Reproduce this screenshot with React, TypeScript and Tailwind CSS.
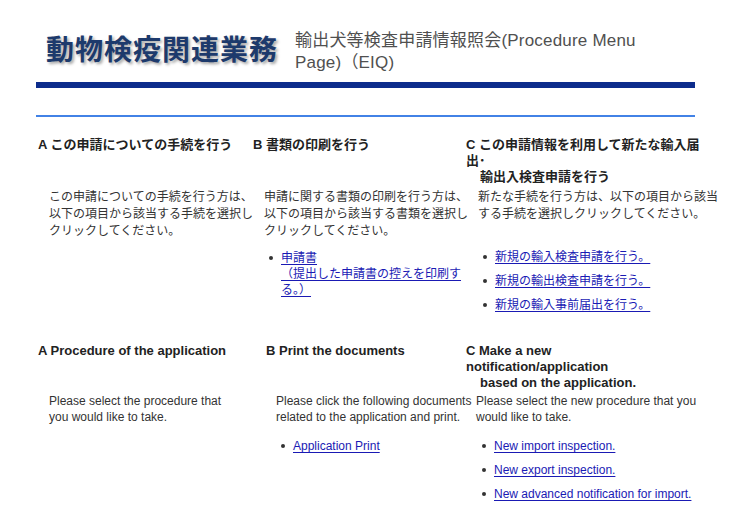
import React from "react";

const JP = { fontFamily: '"Liberation Sans", "Noto Sans CJK JP", sans-serif' };

function Dot() {
  return (
    <span className="w-[12px] shrink-0 flex items-center h-[16px]">
      <span className="block w-[4px] h-[4px] rounded-full bg-[#333]" />
    </span>
  );
}

function LinkItem({ children, dotPad }: { children: React.ReactNode; dotPad: string }) {
  return (
    <div className={`flex ${dotPad}`}>
      <Dot />
      <a href="#" className="text-[#1a1ab4] underline underline-offset-2 leading-[16px]">
        {children}
      </a>
    </div>
  );
}

export default function App() {
  return (
    <div className="w-[740px] h-[524px] bg-white overflow-hidden text-[#333] whitespace-nowrap" style={JP}>
      {/* header */}
      <div className="flex items-start pt-[30px] pl-[46px]">
        <div className="mt-[5px] text-[28px] leading-[32px] font-bold tracking-[1px] text-[#1d3a6c] [text-shadow:2px_2px_3px_rgba(0,0,0,0.35)]">
          動物検疫関連業務
        </div>
        <div className="ml-[17px] text-[17px] leading-[22px] tracking-[0.2px] text-[#505050]">
          輸出犬等検査申請情報照会(Procedure Menu
          <br />
          Page)（EIQ)
        </div>
      </div>
      <div className="ml-[36px] w-[659px] h-[6px] mt-[8px] bg-[#0d2c8c]" />
      <div className="ml-[36px] w-[659px] h-[2px] mt-[27px] bg-[#4282e6]" />

      {/* Japanese section */}
      <div className="flex mt-[20px] h-[206px] pl-[38px] text-[12px]">
        <div className="w-[215px]">
          <div className="h-[52px] text-[13px] font-bold leading-[16px] text-[#222]">A この申請についての手続を行う</div>
          <div className="pl-[11px] leading-[17px]">
            この申請についての手続を行う方は、
            <br />
            以下の項目から該当する手続を選択し
            <br />
            クリックしてください。
          </div>
        </div>
        <div className="w-[213px]">
          <div className="h-[52px] text-[13px] font-bold leading-[16px] text-[#222]">B 書類の印刷を行う</div>
          <div className="pl-[11px] leading-[17px]">
            申請に関する書類の印刷を行う方は、
            <br />
            以下の項目から該当する書類を選択し
            <br />
            クリックしてください。
          </div>
          <div className="mt-[10px]">
            <LinkItem dotPad="pl-[16px]">
              申請書
              <br />
              （提出した申請書の控えを印刷す
              <br />
              る。）
            </LinkItem>
          </div>
        </div>
        <div className="w-[260px]">
          <div className="h-[52px] text-[13px] font-bold leading-[16px] text-[#222]">
            C この申請情報を利用して新たな輸入届
            <br />
            出･
            <br />
            <span className="pl-[14px]">輸出入検査申請を行う</span>
          </div>
          <div className="pl-[12px] leading-[17px]">
            新たな手続を行う方は、以下の項目から該当
            <br />
            する手続を選択しクリックしてください。
          </div>
          <div className="mt-[26px] flex flex-col gap-[8px]">
            <LinkItem dotPad="pl-[17px]">新規の輸入検査申請を行う。</LinkItem>
            <LinkItem dotPad="pl-[17px]">新規の輸出検査申請を行う。</LinkItem>
            <LinkItem dotPad="pl-[17px]">新規の輸入事前届出を行う。</LinkItem>
          </div>
        </div>
      </div>

      {/* English section */}
      <div className="flex pl-[38px] text-[12px]">
        <div className="w-[228px]">
          <div className="h-[50px] text-[13px] font-bold leading-[16px] text-[#222]">A Procedure of the application</div>
          <div className="pl-[11px] leading-[16px]">
            Please select the procedure that
            <br />
            you would like to take.
          </div>
        </div>
        <div className="w-[200px]">
          <div className="h-[50px] text-[13px] font-bold leading-[16px] text-[#222]">B Print the documents</div>
          <div className="pl-[10px] leading-[16px]">
            Please click the following documents
            <br />
            related to the application and print.
          </div>
          <div className="mt-[13px]">
            <LinkItem dotPad="pl-[15px]">Application Print</LinkItem>
          </div>
        </div>
        <div className="w-[270px]">
          <div className="h-[50px] text-[13px] font-bold leading-[16px] text-[#222]">
            C Make a new
            <br />
            notification/application
            <br />
            <span className="pl-[14px]">based on the application.</span>
          </div>
          <div className="pl-[10px] leading-[16px]">
            Please select the new procedure that you
            <br />
            would like to take.
          </div>
          <div className="mt-[13px] flex flex-col gap-[8px]">
            <LinkItem dotPad="pl-[16px]">New import inspection.</LinkItem>
            <LinkItem dotPad="pl-[16px]">New export inspection.</LinkItem>
            <LinkItem dotPad="pl-[16px]">New advanced notification for import.</LinkItem>
          </div>
        </div>
      </div>
    </div>
  );
}
